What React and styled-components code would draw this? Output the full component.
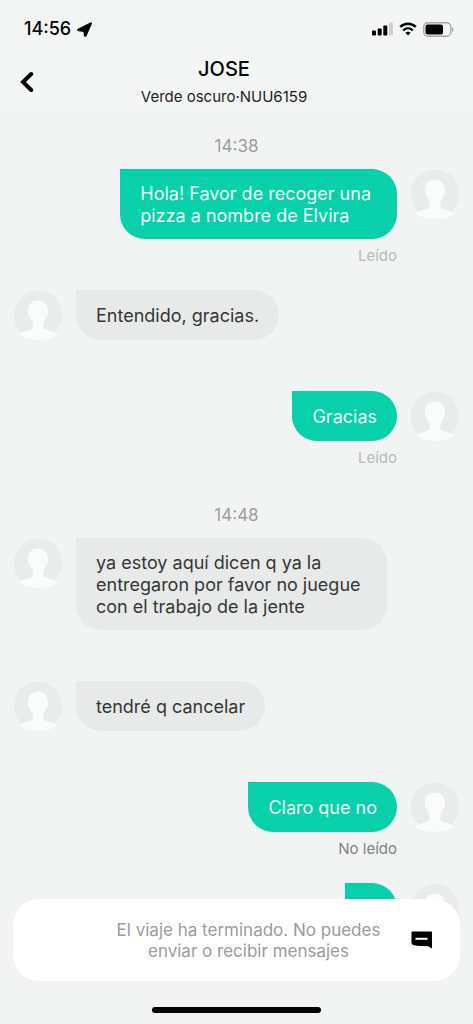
import React from "react";
import styled, { createGlobalStyle } from "styled-components";

const GlobalStyle = createGlobalStyle`
  *, *::before, *::after { box-sizing: border-box; }
  body {
    margin: 0;
    background: #f2f4f4;
    color: #050606;
    font-family: Inter, "Liberation Sans", sans-serif;
    font-size: 18px;
    line-height: 22px;
  }
`;

const Screen = styled.div`
  display: flex;
  flex-direction: column;
  height: 100vh;
`;

const TopArea = styled.div`
  flex: none;
  background: #f4f5f5;
  border-bottom: 2px solid #f1f2f2;
`;

const StatusBar = styled.div`
  display: flex;
  align-items: center;
  justify-content: space-between;
  padding: 18px 19px 0 24px;
`;

const Clock = styled.div`
  display: flex;
  align-items: center;
  gap: 6px;
  font-weight: 500;
`;

const Indicators = styled.div`
  display: flex;
  align-items: center;
  gap: 6px;
`;

const Header = styled.header`
  display: grid;
  grid-template-columns: 54px 1fr 79px;
  align-items: center;
  padding: 16px 0 4px;
`;

const BackButton = styled.button`
  display: flex;
  justify-content: center;
  align-items: center;
  height: 48px;
  padding: 0;
  border: 0;
  background: none;
  color: inherit;
`;

const Heading = styled.div`
  text-align: center;
`;

const Name = styled.h1`
  margin: 0;
  font-size: 20px;
  font-weight: 500;
  line-height: 26px;
`;

const Vehicle = styled.p`
  margin: 0;
  padding-top: 4px;
  font-size: 15px;
  line-height: 22px;
  color: #1d1f1f;
`;

const Thread = styled.main`
  flex: 1;
  min-height: 0;
  overflow: hidden;
  padding: 9px 14px 0;
`;

const Timestamp = styled.time`
  display: block;
  height: 46px;
  padding-top: 12px;
  text-align: center;
  font-size: 17px;
  color: #9b9d9d;
`;

const Message = styled.article`
  display: flex;
  flex-direction: ${(p) => (p.$mine ? "row-reverse" : "row")};
  align-items: flex-start;
  gap: 14px;
`;

const Content = styled.div`
  display: flex;
  flex-direction: column;
  align-items: ${(p) => (p.$mine ? "flex-end" : "flex-start")};
`;

const Bubble = styled.p`
  display: flex;
  align-items: center;
  min-width: 52px;
  min-height: 50px;
  margin: 0;
  padding: 14px ${(p) => (p.$multiline ? 26 : 20)}px 12px 20px;
  border-radius: 0 25px 25px 25px;
  white-space: pre-line;
  background: ${(p) => (p.$mine ? "#07d0aa" : "#e8eae9")};
  color: ${(p) => (p.$mine ? "#effffa" : "#353737")};
`;

const Receipt = styled.div`
  height: 51px;
  padding-top: 6px;
  font-size: 15px;
  color: ${(p) => (p.$unread ? "#7e8286" : "#b7b9b9")};
`;

const Footer = styled.footer`
  position: relative;
  flex: none;
  margin-top: -24px;
  padding: 0 13px 11px;
`;

const Notice = styled.div`
  display: grid;
  grid-template-columns: 1fr 78px;
  align-items: center;
  min-height: 82px;
  padding-left: 102px;
  border-radius: 26px;
  background: #fff;
`;

const NoticeText = styled.p`
  margin: 0;
  padding-top: 2px;
  text-align: center;
  white-space: pre-line;
  font-size: 17px;
  line-height: 21px;
  color: #9a9c9c;
`;

const QuickReply = styled.button`
  display: flex;
  justify-content: center;
  padding: 0;
  border: 0;
  background: none;
  color: #000;
`;

const HomeIndicator = styled.div`
  width: 38%;
  height: 6px;
  margin: 26px auto 0;
  border-radius: 3px;
  background: #000;
`;

const AvatarSvg = styled.svg`
  flex: none;
  width: 48px;
  height: 50px;
`;

function Avatar() {
  return (
    <AvatarSvg viewBox="0 0 48 50" aria-hidden="true">
      <ellipse cx="24" cy="25" rx="24" ry="24.5" fill="#eaebeb" />
      <path
        d="M24 10.500c-6.200 0-9.900 4-9.700 9.600 0 1-.7 1.600-.5 3.200.2 1.900.9 3 1.900 3.200.6 2.600 1.600 4.500 3 6v4c0 2-1.600 3.200-4.600 4.100-4.200 1.200-7.400 2-9.400 3.700C9.500 48 16 50 24 50s14.500-2 19.300-5.700c-2-1.700-5.200-2.500-9.400-3.700-3-.9-4.600-2.100-4.600-4.100v-4c1.400-1.500 2.400-3.400 3-6 1-.2 1.700-1.300 1.900-3.200.2-1.600-.5-2.200-.5-3.200.2-5.600-3.500-9.600-9.700-9.600z"
        fill="#fafbfb"
      />
    </AvatarSvg>
  );
}

function ChatMessage({ mine = false, text, receipt = "", unread = false }) {
  return (
    <Message $mine={mine}>
      <Avatar />
      <Content $mine={mine}>
        <Bubble $mine={mine} $multiline={text.includes("\n")}>{text}</Bubble>
        <Receipt $unread={unread}>{receipt}</Receipt>
      </Content>
    </Message>
  );
}

export default function App() {
  return (
    <Screen>
      <GlobalStyle />
      <TopArea>
        <StatusBar>
          <Clock>
            14:56
            <svg width="15" height="15" viewBox="0 0 15 15" aria-hidden="true">
              <path d="M1.200 7.200 13.600 1c.6-.2.900.1.700.7L9 13.800c-.3.600-1.400.500-1.500-.2L7 9.400 1.500 8.600c-.8-.1-1-.9-.3-1.400z" fill="currentColor" stroke="currentColor" strokeWidth="1.200" strokeLinejoin="round" />
            </svg>
          </Clock>
          <Indicators>
            <svg width="21" height="14" viewBox="0 0 21 14" aria-hidden="true">
              <rect x="0" y="8.500" width="4" height="5" rx="1" />
              <rect x="5.700" y="6.500" width="4" height="7" rx="1" />
              <rect x="11.300" y="3.500" width="4" height="10" rx="1" />
              <rect x="17" y="0.500" width="4" height="13" rx="1" fill="#cfd1d1" />
            </svg>
            <svg width="18" height="14" viewBox="0 0 18 14" aria-hidden="true">
              <path d="M1.200 4.900C5.700.7 12.300.7 16.800 4.900" fill="none" stroke="currentColor" strokeWidth="2.600" />
              <path d="M4.200 8.300c2.800-2.500 6.800-2.500 9.600 0" fill="none" stroke="currentColor" strokeWidth="2.300" />
              <path d="M6.300 10.700c1.600-1.300 3.800-1.300 5.400 0L9 13.500z" fill="currentColor" />
            </svg>
            <svg width="31" height="15" viewBox="0 0 31 15" aria-hidden="true">
              <rect x="0.750" y="0.750" width="27" height="13.500" rx="4" fill="none" stroke="#a4a6a6" strokeWidth="1.300" />
              <rect x="2.500" y="2.500" width="17.500" height="10" rx="2" />
              <path d="M29.200 5.200c1.600.6 1.600 4 0 4.600z" fill="#8f9191" />
            </svg>
          </Indicators>
        </StatusBar>
        <Header>
          <BackButton aria-label="Volver">
            <svg width="14" height="22" viewBox="0 0 14 22" aria-hidden="true">
              <path d="M11.200 3 3 11l8.200 8" fill="none" stroke="currentColor" strokeWidth="4" strokeLinecap="round" strokeLinejoin="miter" />
            </svg>
          </BackButton>
          <Heading>
            <Name>JOSE</Name>
            <Vehicle>Verde oscuro·NUU6159</Vehicle>
          </Heading>
        </Header>
      </TopArea>
      <Thread>
        <Timestamp>14:38</Timestamp>
        <ChatMessage mine text={"Hola! Favor de recoger una\npizza a nombre de Elvira"} receipt="Leído" />
        <ChatMessage text="Entendido, gracias." />
        <ChatMessage mine text="Gracias" receipt="Leído" />
        <Timestamp>14:48</Timestamp>
        <ChatMessage text={"ya estoy aquí dicen q ya la\nentregaron por favor no juegue\ncon el trabajo de la jente"} />
        <ChatMessage text="tendré q cancelar" />
        <ChatMessage mine text="Claro que no" receipt="No leído" unread />
        <ChatMessage mine text="" />
      </Thread>
      <Footer>
        <Notice>
          <NoticeText>{"El viaje ha terminado. No puedes\nenviar o recibir mensajes"}</NoticeText>
          <QuickReply aria-label="Mensajes rápidos">
            <svg width="21" height="18" viewBox="0 0 21 18" aria-hidden="true">
              <path d="M1 .5h19c.5 0 1 .4 1 1v16l-4.500-2.500c-5 0-10 0-13.500-.8C1.200 13.800.5 13 .5 11V1.300c0-.5.2-.8.500-.8z" fill="currentColor" />
              <path d="M4.500 7.800h12" stroke="#fff" strokeWidth="2" />
            </svg>
          </QuickReply>
        </Notice>
        <HomeIndicator />
      </Footer>
    </Screen>
  );
}
